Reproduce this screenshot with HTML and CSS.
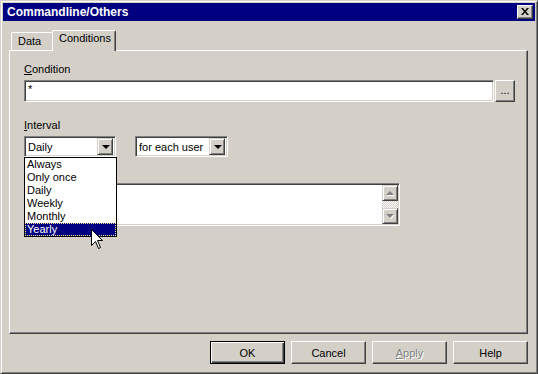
FILE: index.html
```html
<!DOCTYPE html>
<html lang="en">
<head>
    <meta charset="UTF-8">
    <title>Commandline/Others</title>
    <link rel="stylesheet" href="styles.css">
</head>
<body>
    <div class="window">
        <div class="titlebar">
            <span class="title">Commandline/Others</span>
            <div class="close">
                <svg width="8" height="7" viewBox="0 0 8 7"><path d="M0 0h2l2 2.5L6 0h2L5 3.5 8 7H6L4 4.5 2 7H0l3-3.5z" fill="#000"/></svg>
            </div>
        </div>

        <div class="tabs">
            <div class="tab tab-data">Data</div>
            <div class="tab active">Conditions</div>
        </div>

        <div class="panel">
            <div class="field-label"><u>C</u>ondition</div>
            <div class="row">
                <div class="edit">*</div>
                <div class="btn btn-dots">...</div>
            </div>

            <div class="field-label interval"><u>I</u>nterval</div>
            <div class="row combos">
                <div class="combo-wrap">
                    <div class="combo combo-interval">
                        <span class="combo-text">Daily</span>
                        <span class="combo-btn"><span class="tri"></span></span>
                    </div>
                    <ul class="dropdown">
                        <li>Always</li>
                        <li>Only once</li>
                        <li>Daily</li>
                        <li>Weekly</li>
                        <li>Monthly</li>
                        <li class="selected">Yearly</li>
                    </ul>
                </div>
                <div class="combo combo-user">
                    <span class="combo-text">for each user</span>
                    <span class="combo-btn"><span class="tri"></span></span>
                </div>
            </div>

            <div class="memo">
                <div class="memo-text"></div>
                <div class="scrollbar">
                    <div class="sb-btn"><span class="tri-up"></span></div>
                    <div class="sb-track"></div>
                    <div class="sb-btn"><span class="tri-down"></span></div>
                </div>
            </div>
        </div>

        <div class="buttons">
            <div class="btn btn-default">OK</div>
            <div class="btn">Cancel</div>
            <div class="btn disabled"><u>A</u>pply</div>
            <div class="btn">Help</div>
        </div>
    </div>

    <svg class="cursor" width="13" height="21" viewBox="0 0 13 21">
        <path d="M0.5 0.5 L0.5 16.5 L4.5 12.5 L7.5 19.5 L9.5 18.5 L6.5 11.5 L11.5 11.5 Z" fill="#fff" stroke="#000" stroke-width="1"/>
    </svg>
</body>
</html>
```

FILE: styles.css
```css
body {
    margin: 0;
    position: relative;
    font-family: "Liberation Sans", Arial, sans-serif;
    font-size: 11px;
    color: #000;
    background-color: #d4d0c8;
}

.window {
    box-sizing: border-box;
    width: 538px;
    height: 374px;
    padding: 2px;
    background-color: #d4d0c8;
    border: 1px solid;
    border-color: #d4d0c8 #404040 #404040 #d4d0c8;
    box-shadow: inset 1px 1px #fff, inset -1px -1px #808080;
    display: flex;
    flex-direction: column;
}

.titlebar {
    height: 18px;
    background-color: #000080;
    display: flex;
    align-items: center;
    justify-content: space-between;
    padding-left: 4px;
    padding-right: 2px;
}

.title {
    color: #fff;
    font-weight: bold;
    font-size: 12px;
}

.close {
    box-sizing: border-box;
    width: 16px;
    height: 14px;
    background-color: #d4d0c8;
    border: 1px solid;
    border-color: #fff #404040 #404040 #fff;
    box-shadow: inset -1px -1px #808080;
    display: flex;
    align-items: center;
    justify-content: center;
    padding-bottom: 1px;
}

/* tabs */
.tabs {
    display: flex;
    align-items: flex-end;
    height: 20px;
    margin-top: 9px;
    padding-left: 8px;
}

.tab {
    box-sizing: border-box;
    height: 18px;
    padding: 2px 6px 0;
    line-height: 13px;
    border: 1px solid;
    border-bottom: none;
    border-color: #fff #404040 #fff #fff;
    border-radius: 2px 2px 0 0;
    box-shadow: inset -1px 0 #808080;
}

.tab-data {
    width: 43px;
}

.tab.active {
    position: relative;
    z-index: 1;
    width: 64px;
    height: 21px;
    padding-top: 1px;
    margin-left: -2px;
    margin-bottom: -1px;
    background-color: #d4d0c8;
}

/* panel */
.panel {
    box-sizing: border-box;
    height: 284px;
    margin: 0 7px 0 6px;
    padding: 12px 12px 0 14px;
    border: 1px solid;
    border-color: #fff #404040 #404040 #fff;
    box-shadow: inset -1px -1px #808080;
}

.field-label {
    line-height: 13px;
    margin-bottom: 4px;
}

.field-label.interval {
    margin-top: 17px;
}

.row {
    display: flex;
    align-items: flex-start;
}

.sunken {
    border: 1px solid;
}

.edit {
    box-sizing: border-box;
    width: 470px;
    height: 22px;
    padding: 2px 3px;
    line-height: 13px;
    background-color: #fff;
    border: 1px solid;
    border-color: #808080 #fff #fff #808080;
    box-shadow: inset 1px 1px #404040, inset -1px -1px #d4d0c8;
}

.btn {
    box-sizing: border-box;
    width: 75px;
    height: 23px;
    display: flex;
    align-items: center;
    justify-content: center;
    background-color: #d4d0c8;
    border: 1px solid;
    border-color: #fff #404040 #404040 #fff;
    box-shadow: inset -1px -1px #808080;
}

.btn-dots {
    width: 20px;
    height: 22px;
    margin-left: 1px;
    padding-bottom: 2px;
}

/* combos */
.combo-wrap {
    position: relative;
}

.combo {
    box-sizing: border-box;
    height: 21px;
    display: flex;
    align-items: center;
    justify-content: space-between;
    padding: 0 2px 0 3px;
    background-color: #fff;
    border: 1px solid;
    border-color: #808080 #fff #fff #808080;
    box-shadow: inset 1px 1px #404040, inset -1px -1px #d4d0c8;
}

.combo-interval {
    width: 92px;
}

.combo-user {
    width: 93px;
    margin-left: 19px;
}

.combo-btn {
    box-sizing: border-box;
    width: 16px;
    height: 17px;
    display: flex;
    align-items: center;
    justify-content: center;
    background-color: #d4d0c8;
    border: 1px solid;
    border-color: #d4d0c8 #404040 #404040 #d4d0c8;
    box-shadow: inset 1px 1px #fff, inset -1px -1px #808080;
}

.tri {
    width: 0;
    height: 0;
    border-left: 4px solid transparent;
    border-right: 4px solid transparent;
    border-top: 4px solid #000;
    margin-left: 1px;
}

.dropdown {
    position: absolute;
    top: 21px;
    left: 0;
    z-index: 2;
    box-sizing: border-box;
    width: 93px;
    height: 80px;
    margin: 0;
    padding: 0;
    list-style: none;
    background-color: #fff;
    border: 1px solid #000;
}

.dropdown li {
    box-sizing: border-box;
    height: 13px;
    line-height: 13px;
    padding-left: 2px;
}

.dropdown li.selected {
    background-color: #000080;
    color: #fff;
    outline: 1px dotted #ffe890;
    outline-offset: -1px;
}

/* memo */
.memo {
    box-sizing: border-box;
    width: 376px;
    height: 43px;
    margin-top: 26px;
    display: flex;
    justify-content: space-between;
    padding: 1px;
    background-color: #fff;
    border: 1px solid;
    border-color: #808080 #fff #fff #808080;
    box-shadow: inset 1px 1px #404040, inset -1px -1px #d4d0c8;
}

.scrollbar {
    width: 16px;
    display: flex;
    flex-direction: column;
}

.sb-btn {
    box-sizing: border-box;
    height: 16px;
    display: flex;
    align-items: center;
    justify-content: center;
    background-color: #d4d0c8;
    border: 1px solid;
    border-color: #d4d0c8 #404040 #404040 #d4d0c8;
    box-shadow: inset 1px 1px #fff, inset -1px -1px #808080;
}

.sb-track {
    flex: 1;
    background: repeating-conic-gradient(#fff 0 25%, #d4d0c8 0 50%) 0 0 / 2px 2px;
}

.tri-up,
.tri-down {
    width: 0;
    height: 0;
    border-left: 4px solid transparent;
    border-right: 4px solid transparent;
    filter: drop-shadow(1px 1px 0 #fff);
}

.tri-up {
    border-bottom: 4px solid #808080;
}

.tri-down {
    border-top: 4px solid #808080;
}

/* bottom buttons */
.buttons {
    display: flex;
    justify-content: flex-end;
    gap: 6px;
    margin-top: 7px;
    margin-right: 7px;
}

.btn-default {
    border: 1px solid #000;
    box-shadow: inset 1px 1px #fff, inset -1px -1px #404040, inset -2px -2px #808080;
}

.btn.disabled {
    color: #808080;
    text-shadow: 1px 1px #fff;
}

.cursor {
    position: absolute;
    left: 91px;
    top: 229px;
    z-index: 5;
}
```
